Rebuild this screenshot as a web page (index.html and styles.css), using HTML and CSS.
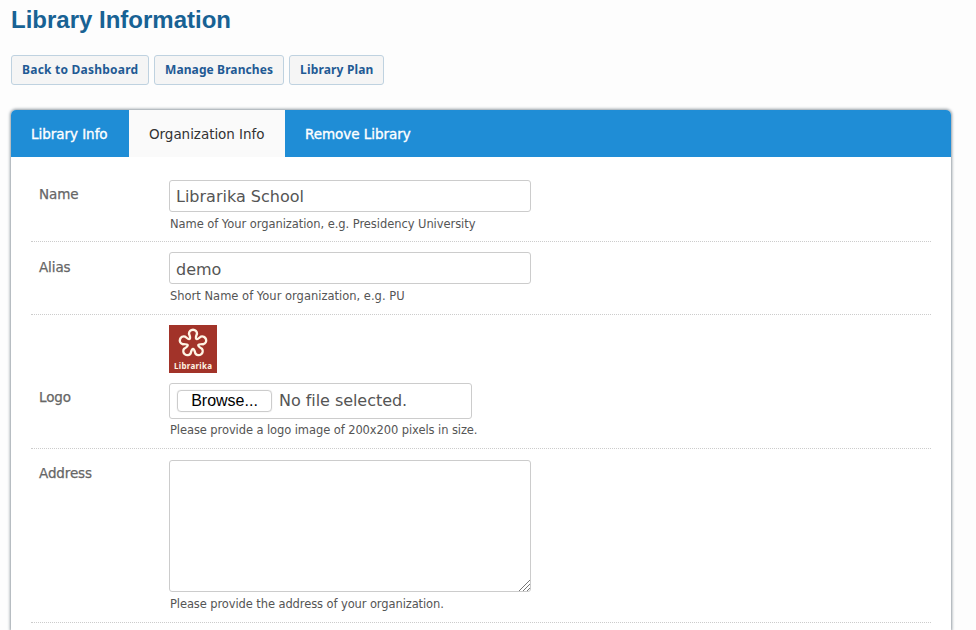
FILE: index.html
```html
<!DOCTYPE html>
<html lang="en">
<head>
<meta charset="utf-8">
<title>Library Information</title>
<link rel="stylesheet" href="styles.css">
</head>
<body>
<h1><span>Library Information</span></h1>
<nav class="actions">
  <a class="btn dash">Back to Dashboard</a>
  <a class="btn branches">Manage Branches</a>
  <a class="btn plan">Library Plan</a>
</nav>
<main class="card">
  <div class="tabs">
    <a class="tab tab-info">Library Info</a>
    <a class="tab active">Organization Info</a>
    <a class="tab tab-remove">Remove Library</a>
  </div>
  <form class="form">
    <div class="row row-name">
      <label>Name</label>
      <div class="field">
        <div class="input value-name">Librarika School</div>
        <p class="hint hint-name">Name of Your organization, e.g. Presidency University</p>
      </div>
    </div>
    <div class="row row-alias">
      <label>Alias</label>
      <div class="field">
        <div class="input">demo</div>
        <p class="hint hint-alias">Short Name of Your organization, e.g. PU</p>
      </div>
    </div>
    <div class="row row-logo">
      <label>Logo</label>
      <div class="field">
        <svg class="logo" width="48" height="48" viewBox="0 0 48 48">
          <rect width="48" height="48" fill="#a23329"/>
          <path transform="translate(0 -0.3)" d="M20 9.100A4 4 0 0 1 28 9.100Q24.600 17.900 31.900 11.900A4 4 0 0 1 34.400 19.500Q25 19 32.900 24.100A4 4 0 0 1 26.400 28.800Q24 19.700 21.600 28.800A4 4 0 0 1 15.100 24.100Q23 19 13.600 19.500A4 4 0 0 1 16.100 11.900Q23.400 17.900 20 9.100Z" fill="none" stroke="#fff5e4" stroke-width="2.400" stroke-linejoin="round"/>
          <text x="5" y="44" textLength="38" lengthAdjust="spacing" class="logo-text">Librarika</text>
        </svg>
        <div class="file"><span class="browse">Browse...</span><span class="filename">No file selected.</span></div>
        <p class="hint hint-logo">Please provide a logo image of 200x200 pixels in size.</p>
      </div>
    </div>
    <div class="row row-address">
      <label>Address</label>
      <div class="field">
        <div class="area">
          <svg class="grip" width="12" height="12" viewBox="0 0 12 12"><path d="M1 12L12 1M5 12L12 5M9 12L12 9" stroke="#777" stroke-width="1" fill="none"/></svg>
        </div>
        <p class="hint hint-address">Please provide the address of your organization.</p>
      </div>
    </div>
  </form>
</main>
</body>
</html>
```
FILE: styles.css
```css
* { box-sizing: border-box; }
body {
  margin: 0;
  height: 630px;
  overflow: hidden;
  padding: 0 24px 0 11px;
  background: #fdfdfd;
  color: #555;
  font-family: Verdana, "DejaVu Sans", sans-serif;
  white-space: nowrap;
}
h1 {
  margin: 0;
  height: 55px;
  padding-top: 5px;
  font: bold 24px/30px "Liberation Sans", sans-serif;
  color: #186294;
}
.actions { display: flex; gap: 5px; height: 55px; }
.btn {
  height: 30px;
  border: 1px solid #bfd2e0;
  border-radius: 3px;
  background: #f5f5f5;
  color: #1f5a94;
  font: bold 12px/28px "Noto Sans", sans-serif;
  padding-left: 10px;
}
.dash { width: 138px; letter-spacing: 0.23px; }
.branches { width: 130px; letter-spacing: 0.1px; }
.plan { width: 95px; letter-spacing: 0.17px; }
.card {
  width: 940px;
  height: 520px;
  background: #fff;
  border-radius: 5px 5px 0 0;
  box-shadow: 0 0 3px 1px #929ba2;
}
.tabs {
  display: flex;
  height: 47px;
  background: #1f8dd6;
  border-radius: 5px 5px 0 0;
  overflow: hidden;
}
.tab {
  padding: 0 20px;
  line-height: 49px;
  font-size: 13.5px;
  letter-spacing: -0.04px;
  color: #fff;
  -webkit-text-stroke: 0.35px #fff;
}
.tab-info { width: 118px; }
.active {
  width: 156px;
  background: #fafafa;
  color: #333;
  -webkit-text-stroke: 0;
}
.form { margin: 0 20px; padding-top: 13px; }
.row { display: flex; border-bottom: 1px dotted #ccc; }
.row-name { height: 72px; padding-top: 10px; }
.row-alias { height: 73px; padding-top: 10px; }
.row-logo { height: 134px; padding-top: 10px; }
.row-address { height: 174px; padding-top: 11px; }
label {
  width: 138px;
  padding: 4px 0 0 8px;
  font-size: 13.5px;
  letter-spacing: -0.12px;
  line-height: 20px;
  color: #666;
  -webkit-text-stroke: 0.25px #666;
}
.row-alias label { padding-top: 5px; }
.row-logo label { padding-top: 62px; }
.row-address label { padding-top: 3px; }
.input, .area, .file {
  width: 362px;
  border: 1px solid #ccc;
  border-radius: 3px;
  background: #fff;
}
.input { height: 32px; padding-left: 6px; font-size: 16px; line-height: 31px; }
.row-alias .input { line-height: 33px; }
.area { height: 132px; display: flex; align-items: flex-end; justify-content: flex-end; }
.hint { margin: 4px 0 0 1px; font-size: 11.5px; line-height: 17px; }
.hint-name { letter-spacing: -0.06px; }
.hint-address { letter-spacing: -0.1px; }
.logo { display: block; margin-bottom: 10px; }
.logo-text { font: bold 8px "Noto Sans", sans-serif; fill: #fff5e4; }
.file { display: flex; align-items: center; width: 303px; height: 36px; padding-left: 7px; }
.browse {
  width: 95px;
  height: 22px;
  border: 1px solid #ccc;
  border-radius: 4px;
  box-shadow: 0 0 1px #ccc;
  color: #000;
  text-align: center;
  font: 16px/20px "Liberation Sans", sans-serif;
}
.filename { margin-left: 7px; font-size: 16px; line-height: 32px; letter-spacing: -0.05px; }
.hint-logo { margin-top: 3px; letter-spacing: -0.09px; }
```
